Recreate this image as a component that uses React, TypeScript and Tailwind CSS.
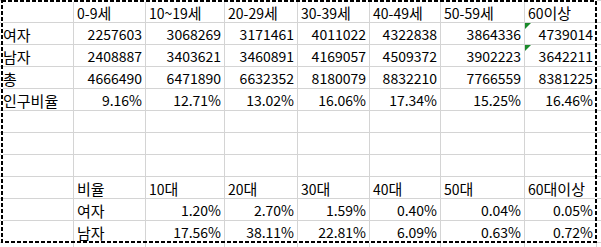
import { Fragment } from "react"

type Cell = string | number

const header: Cell[] = ["", "0-9세", "10~19세", "20-29세", "30-39세", "40-49세", "50-59세", "60이상"]

const rows: Cell[][] = [
  header,
  ["여자", 2257603, 3068269, 3171461, 4011022, 4322838, 3864336, 4739014],
  ["남자", 2408887, 3403621, 3460891, 4169057, 4509372, 3902223, 3642211],
  ["총", 4666490, 6471890, 6632352, 8180079, 8832210, 7766559, 8381225],
  ["인구비율", "9.16%", "12.71%", "13.02%", "16.06%", "17.34%", "15.25%", "16.46%"],
  ["", "", "", "", "", "", "", ""],
  ["", "", "", "", "", "", "", ""],
  ["", "", "", "", "", "", "", ""],
  ["", "비율", "10대", "20대", "30대", "40대", "50대", "60대이상"],
  ["", "여자", "1.20%", "2.70%", "1.59%", "0.40%", "0.04%", "0.05%"],
  ["", "남자", "17.56%", "38.11%", "22.81%", "6.09%", "0.63%", "0.72%"],
  ["", "", "", "", "", "", "", ""],
]

// numbers and percentages sit on the right, text on the left (Excel default)
const isNumeric = (v: Cell) => typeof v === "number" || /^[\d.]+%$/.test(v)

// cells showing the green "number stored as text" marker
const flagged = new Set(["1-7", "2-7"])

function CellText({ v }: { v: Cell }) {
  const parts = String(v).split(/([\uac00-\ud7a3]+)/)
  return (
    <span className="pt-[1px]">
      {parts.map((p, i) =>
        /[\uac00-\ud7a3]/.test(p) ? (
          <span key={i} className="text-[15px]">{p}</span>
        ) : (
          <Fragment key={i}>{p}</Fragment>
        )
      )}
    </span>
  )
}

export default function App() {
  return (
    <div className="relative w-[601px] h-[247px] overflow-hidden bg-white font-['Noto_Sans_CJK_KR','Liberation_Sans',sans-serif] text-[14px] text-black">
      <div className="grid grid-cols-[74px_72px_79px_73px_72px_71px_84px_72px_1fr] border-t border-[#d4d4d4]">
        {rows.map((row, r) =>
          [...row, ""].map((v, c) => (
            <div
              key={`${r}-${c}`}
              className={`relative h-[22px] flex items-center border-b border-r border-[#d4d4d4] px-[3px] whitespace-nowrap leading-none ${
                isNumeric(v) ? "justify-end" : "justify-start"
              }`}
            >
              {flagged.has(`${r}-${c}`) && (
                <span className="absolute left-0 top-0 w-0 h-0 border-t-[6px] border-r-[6px] border-t-[#1a8a2a] border-r-transparent" />
              )}
              <CellText v={v} />
            </div>
          ))
        )}
      </div>

      {/* copy marquee around the selected range */}
      <svg className="absolute left-0 top-0 pointer-events-none" width="601" height="247">
        <rect x="2" y="1" width="594" height="241" fill="none" stroke="#ffffff" strokeWidth="2" />
        <rect x="2" y="1" width="594" height="241" fill="none" stroke="#000000" strokeWidth="2" strokeDasharray="4 2" />
      </svg>
    </div>
  )
}
